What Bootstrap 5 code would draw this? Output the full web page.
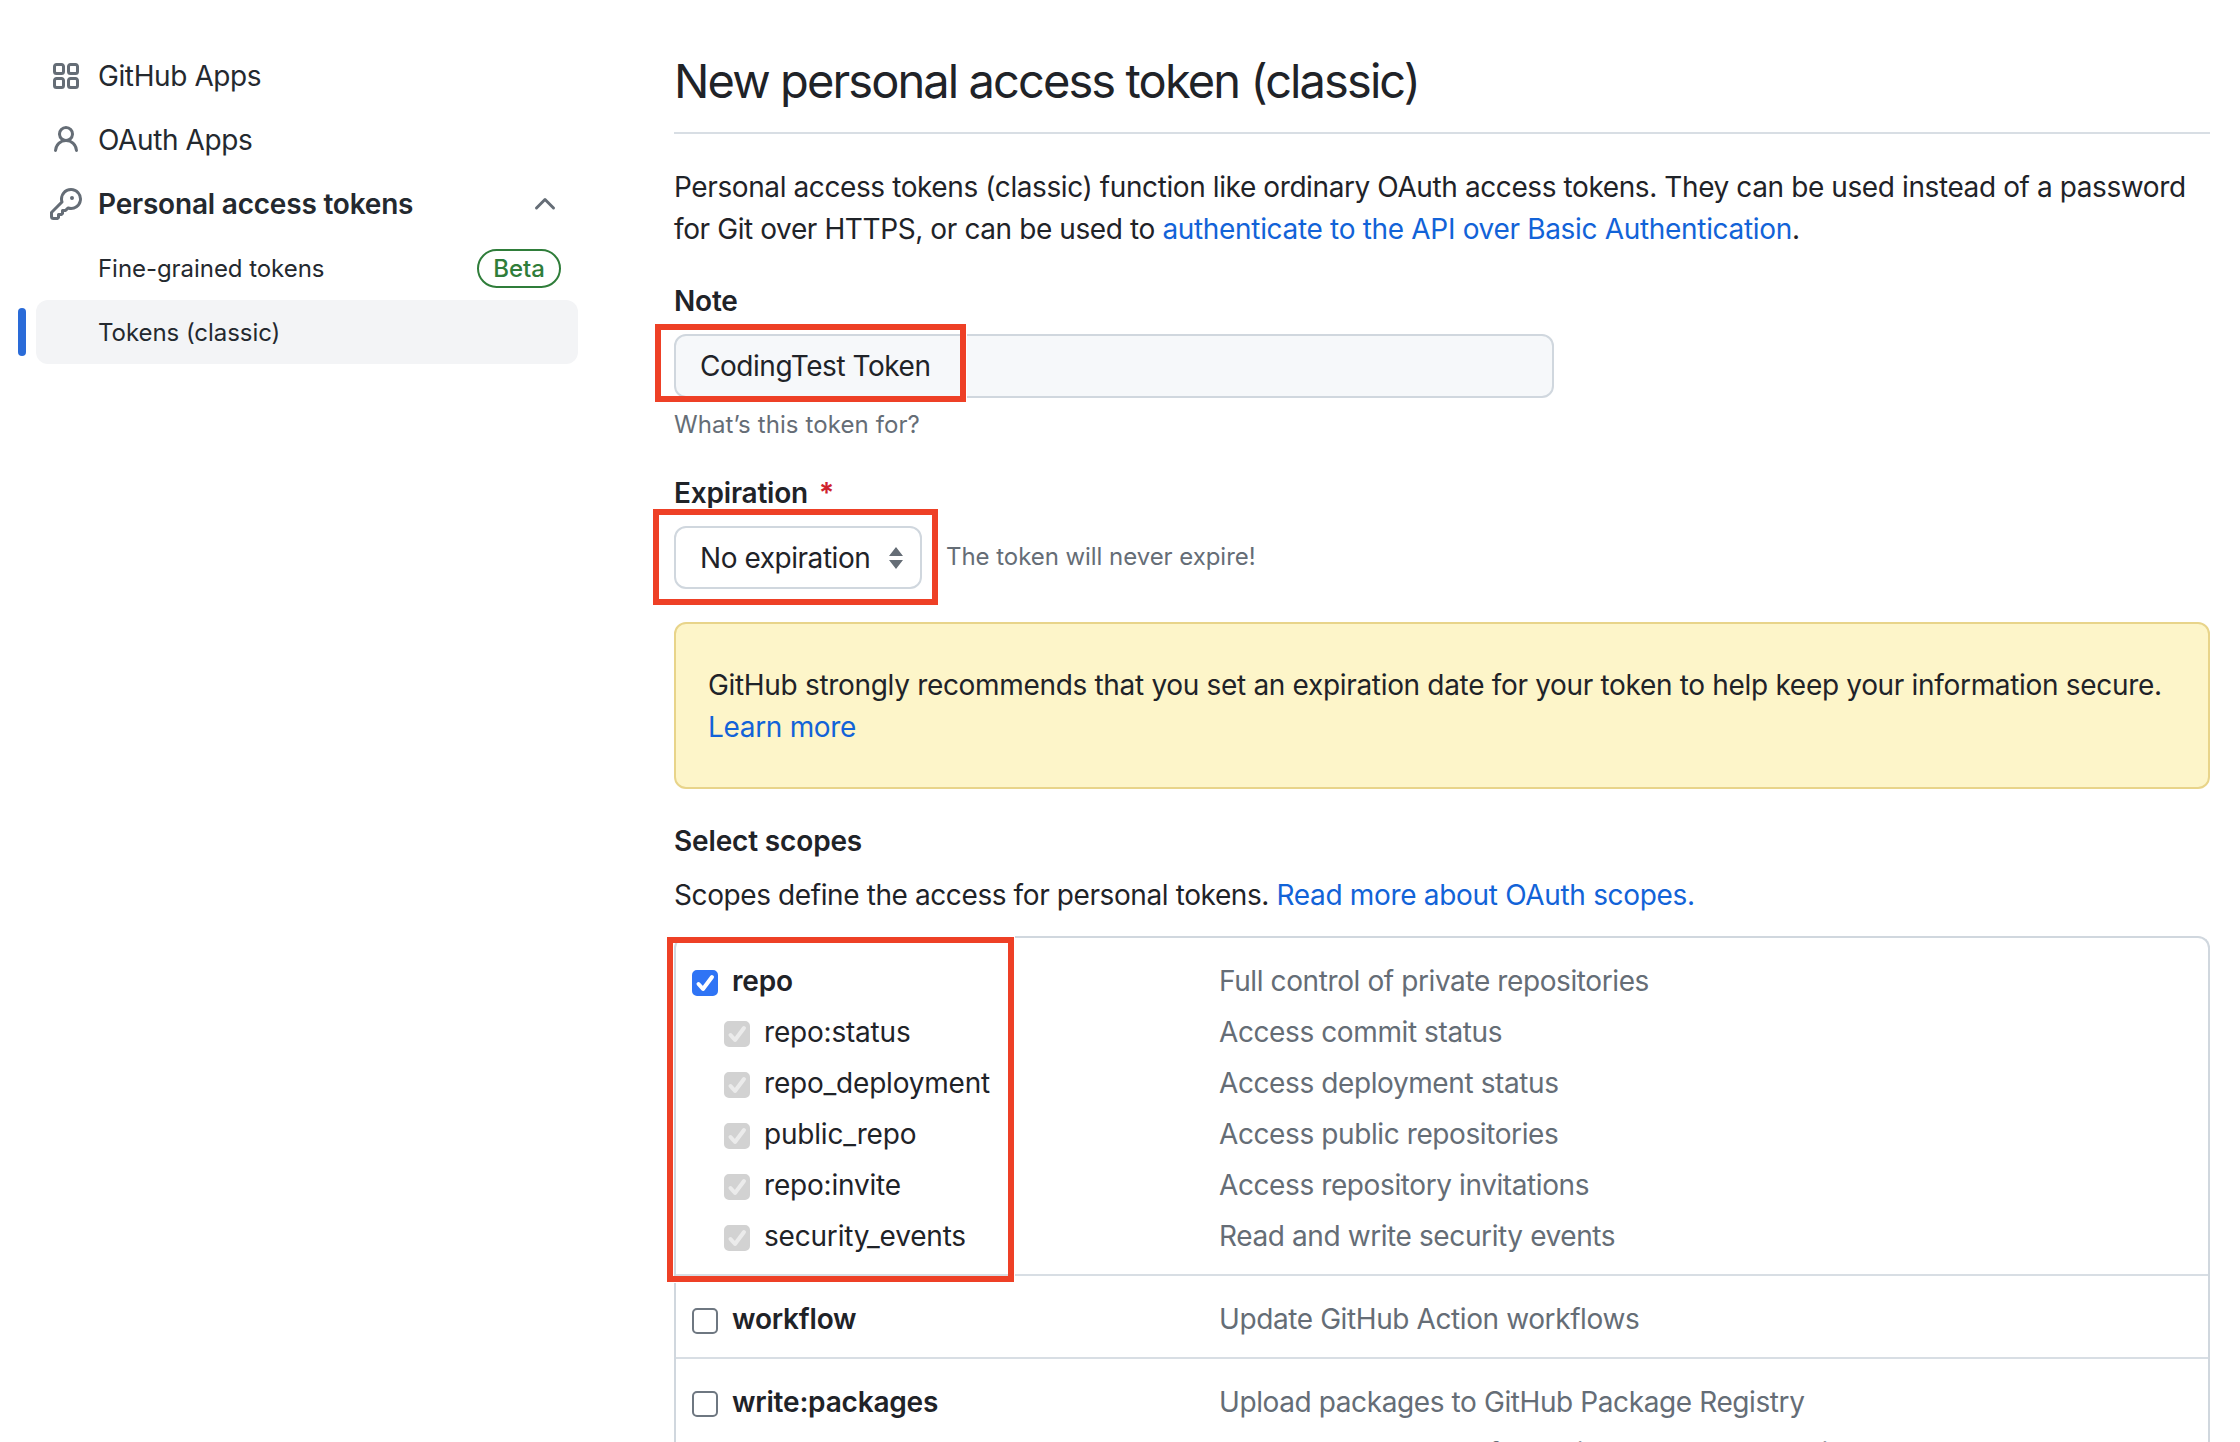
<!DOCTYPE html>
<html lang="en">
<head>
  <meta charset="utf-8">
  <meta name="viewport" content="width=device-width,initial-scale=1">
  <title>New personal access token (classic)</title>
  <link href="https://cdn.jsdelivr.net/npm/bootstrap@5.3.0/dist/css/bootstrap.min.css" rel="stylesheet">
  <style>
    html, body { height: 1442px; overflow: hidden; }
    body { position: relative; font-family: Inter, "Liberation Sans", sans-serif; font-size: 28px; line-height: 42px; color: #1f2328; letter-spacing: -.4px; }
    a { color: #1263d8; text-decoration: none; letter-spacing: -.32px; }

    .side-col { width: 674px; padding: 44px 0 0 36px; flex: none; }
    .side-item { height: 64px; width: 542px; padding-left: 14px; gap: 16px; color: #24292f; position: relative; }
    .side-item svg { width: 32px; height: 32px; fill: #656d76; flex: none; }
    .side-item.strong { font-weight: 600; letter-spacing: -.2px; }
    .side-sub { padding: 2px 0 0 62px; font-size: 24px; letter-spacing: -.05px; }
    .side-on { background: #f3f4f6; border-radius: 12px; }
    .side-on::before { content: ""; position: absolute; left: -18px; top: 8px; bottom: 8px; width: 8px; border-radius: 4px; background: #2a6bd8; }
    .beta-tag { margin: -2px 17px 0 auto; width: 84px; height: 39px; border: 2px solid #2f7d3a; border-radius: 20px; color: #2f7d3a; font-size: 24px; font-weight: 500; line-height: 35px; text-align: center; }
    .chev { margin-left: auto; margin-right: 17px; }

    .main-col { width: 1536px; flex: none; padding-top: 51px; }
    .page-title { font-size: 47px; line-height: 60px; font-weight: 400; margin: 0; padding-bottom: 21px; border-bottom: 2px solid #d8dee4; letter-spacing: -1.9px; }
    .intro { margin: 32px 0 0; }
    .fld-label { font-weight: 600; margin: 30px 0 12px; display: block; letter-spacing: -.2px; }
    .fld-label i { color: #cf222e; font-style: normal; margin-left: 4px; }
    .tok-input.form-control { width: 880px; height: 64px; padding: 0 24px; font-size: 28px; letter-spacing: -.45px; color: #1f2328; background: #f6f8fa; border: 2px solid #d0d7de; border-radius: 12px; }
    .fld-hint { font-size: 24px; line-height: 36px; letter-spacing: .1px; color: #656d76; margin-top: 9px; }
    .fld-hint + .fld-label { margin-top: 29px; }
    .exp-select.form-select { width: 248px; height: 63px; padding: 0 24px; font-size: 28px; letter-spacing: -.45px; color: #1f2328; border: 2px solid #d0d7de; border-radius: 12px; background-size: 16px 24px; background-position: right 16px center; background-image: url("data:image/svg+xml,%3Csvg xmlns='http://www.w3.org/2000/svg' viewBox='0 0 16 24'%3E%3Cpath fill='%23656d76' d='M8 1l7 9H1zM8 23l-7-9h14z'/%3E%3C/svg%3E"); }
    .exp-note { font-size: 24px; letter-spacing: -.05px; color: #656d76; margin: -1px 0 0 24px; }
    .warn-box.alert { margin: 33px 0 0; padding: 40px 32px 39px; background: #fdf5c9; border: 2px solid #e8d48a; border-radius: 12px; color: #1f2328; letter-spacing: -.32px; }
    .sect-title { font-weight: 600; margin: 31px 0 12px; letter-spacing: -.15px; }
    .scope-box { margin-top: 20px; border: 2px solid #d0d7de; border-bottom: 0; border-radius: 12px 12px 0 0; }
    .scope-grp { padding: 17px 16px 13px; border-bottom: 2px solid #d8dee4; }
    .scope-row { height: 51px; }
    .scope-name { width: 527px; flex: none; letter-spacing: -.2px; }
    .scope-name b { font-weight: 600; margin-left: 14px; }
    .scope-name span { margin-left: 14px; }
    .scope-row.nested { padding-left: 32px; }
    .scope-row.nested .scope-name { width: 495px; }
    .scope-desc { color: #656d76; }
    .form-check-input.tick { width: 26px; height: 26px; margin: 4px 0 0; border: 2px solid #6e7781; border-radius: 5px; flex: none; background-size: 26px 26px; background-position: -2px -2px; }
    .form-check-input.tick:checked { background-color: #2f74f5; border-color: #2f74f5; --bs-form-check-bg-image: url("data:image/svg+xml,%3Csvg xmlns='http://www.w3.org/2000/svg' viewBox='0 0 26 26'%3E%3Cpath fill='none' stroke='%23fff' stroke-width='4' stroke-linecap='round' stroke-linejoin='round' d='M6.500 14l4.500 5 9-12'/%3E%3C/svg%3E"); }
    .form-check-input.tick:disabled { background-color: #d2d2d2; border-color: #d2d2d2; opacity: 1; }
    .form-check-input.tick:checked:disabled { --bs-form-check-bg-image: url("data:image/svg+xml,%3Csvg xmlns='http://www.w3.org/2000/svg' viewBox='0 0 26 26'%3E%3Cpath fill='none' stroke='%23ebebeb' stroke-width='4' stroke-linecap='round' stroke-linejoin='round' d='M6.500 14l4.500 5 9-12'/%3E%3C/svg%3E"); }

    .red-mark { position: absolute; border: 6px solid #ee4026; outline: 1px solid #fff; }
    .mark-note { left: 655px; top: 324px; width: 311px; height: 78px; }
    .mark-exp { left: 653px; top: 509px; width: 285px; height: 96px; }
    .mark-repo { left: 667px; top: 937px; width: 347px; height: 345px; }
  </style>
</head>

<body>
  <div class="d-flex">

    <!-- sidebar -->
    <nav class="side-col">
      <div class="side-item d-flex align-items-center">
        <svg viewBox="0 0 16 16"><path d="M1.5 3.25c0-.966.784-1.75 1.75-1.75h2.5c.966 0 1.75.784 1.75 1.75v2.5A1.75 1.75 0 0 1 5.75 7.5h-2.5A1.75 1.75 0 0 1 1.5 5.75Zm7 0c0-.966.784-1.75 1.75-1.75h2.5c.966 0 1.75.784 1.75 1.75v2.5a1.75 1.75 0 0 1-1.75 1.75h-2.5A1.75 1.75 0 0 1 8.5 5.75Zm-7 7c0-.966.784-1.75 1.75-1.75h2.5c.966 0 1.75.784 1.75 1.75v2.5a1.75 1.75 0 0 1-1.75 1.75h-2.5a1.75 1.75 0 0 1-1.75-1.75Zm7 0c0-.966.784-1.75 1.75-1.75h2.5c.966 0 1.75.784 1.75 1.75v2.5a1.75 1.75 0 0 1-1.75 1.75h-2.5a1.75 1.75 0 0 1-1.75-1.75ZM3.25 3a.25.25 0 0 0-.25.25v2.5c0 .138.112.25.25.25h2.5A.25.25 0 0 0 6 5.75v-2.5A.25.25 0 0 0 5.75 3Zm7 0a.25.25 0 0 0-.25.25v2.5c0 .138.112.25.25.25h2.5a.25.25 0 0 0 .25-.25v-2.5a.25.25 0 0 0-.25-.25ZM3 10.25v2.5c0 .138.112.25.25.25h2.5a.25.25 0 0 0 .25-.25v-2.5a.25.25 0 0 0-.25-.25h-2.5a.25.25 0 0 0-.25.25Zm7.25-.25a.25.25 0 0 0-.25.25v2.5c0 .138.112.25.25.25h2.5a.25.25 0 0 0 .25-.25v-2.5a.25.25 0 0 0-.25-.25Z"/></svg>
        GitHub Apps
      </div>
      <div class="side-item d-flex align-items-center">
        <svg viewBox="0 0 16 16"><path d="M10.561 8.073a6.005 6.005 0 0 1 3.432 5.142.75.75 0 1 1-1.498.07 4.5 4.5 0 0 0-8.99 0 .75.75 0 0 1-1.498-.07 6.004 6.004 0 0 1 3.431-5.142 3.999 3.999 0 1 1 5.123 0ZM10.5 5a2.5 2.5 0 1 0-5 0 2.5 2.5 0 0 0 5 0Z"/></svg>
        OAuth Apps
      </div>
      <div class="side-item strong d-flex align-items-center">
        <svg viewBox="0 0 16 16"><path d="M10.5 0a5.499 5.499 0 1 1-1.288 10.848l-.932.932a.749.749 0 0 1-.53.22H7v.75a.749.749 0 0 1-.22.53l-.5.5a.749.749 0 0 1-.53.22H5v.75a.749.749 0 0 1-.22.53l-.5.5a.749.749 0 0 1-.53.22h-2A1.75 1.75 0 0 1 0 14.25v-2c0-.199.079-.389.22-.53l4.932-4.932A5.5 5.5 0 0 1 10.5 0Zm-4 5.5c-.001.431.069.86.205 1.269a.75.75 0 0 1-.181.768L1.5 12.56v1.69c0 .138.112.25.25.25h1.69l.06-.06v-1.19a.75.75 0 0 1 .75-.75h1.19l.06-.06v-1.19a.75.75 0 0 1 .75-.75h1.19l1.023-1.025a.75.75 0 0 1 .768-.18A4 4 0 1 0 6.5 5.5ZM11 6a1 1 0 1 1 0-2 1 1 0 0 1 0 2Z"/></svg>
        Personal access tokens
        <svg class="chev" viewBox="0 0 16 16"><path d="M3.22 10.53a.749.749 0 0 1 0-1.06l4.25-4.25a.749.749 0 0 1 1.06 0l4.25 4.25a.749.749 0 1 1-1.06 1.06L8 6.811 4.28 10.53a.749.749 0 0 1-1.06 0Z"/></svg>
      </div>
      <div class="side-item side-sub d-flex align-items-center">
        Fine-grained tokens
        <span class="beta-tag">Beta</span>
      </div>
      <div class="side-item side-sub side-on d-flex align-items-center">Tokens (classic)</div>
    </nav>

    <!-- form -->
    <main class="main-col">
      <h1 class="page-title">New personal access token (classic)</h1>
      <p class="intro">Personal access tokens (classic) function like ordinary OAuth access tokens. They can be used instead of a password for Git over HTTPS, or can be used to <a href="#">authenticate to the API over Basic Authentication</a>.</p>

      <label class="fld-label">Note</label>
      <input type="text" class="form-control tok-input" value="CodingTest Token">
      <div class="fld-hint">What’s this token for?</div>

      <label class="fld-label">Expiration <i>*</i></label>
      <div class="d-flex align-items-center">
        <select class="form-select exp-select"><option>No expiration</option></select>
        <span class="exp-note">The token will never expire!</span>
      </div>

      <div class="alert warn-box">GitHub strongly recommends that you set an expiration date for your token to help keep your information secure. <a href="#">Learn more</a></div>

      <div class="sect-title">Select scopes</div>
      <div>Scopes define the access for personal tokens. <a href="#">Read more about OAuth scopes.</a></div>

      <div class="scope-box">
        <div class="scope-grp">
          <div class="scope-row d-flex align-items-center">
            <div class="scope-name d-flex align-items-center"><input class="form-check-input tick" type="checkbox" checked><b>repo</b></div>
            <div class="scope-desc">Full control of private repositories</div>
          </div>
          <div class="scope-row nested d-flex align-items-center">
            <div class="scope-name d-flex align-items-center"><input class="form-check-input tick" type="checkbox" checked disabled><span>repo:status</span></div>
            <div class="scope-desc">Access commit status</div>
          </div>
          <div class="scope-row nested d-flex align-items-center">
            <div class="scope-name d-flex align-items-center"><input class="form-check-input tick" type="checkbox" checked disabled><span>repo_deployment</span></div>
            <div class="scope-desc">Access deployment status</div>
          </div>
          <div class="scope-row nested d-flex align-items-center">
            <div class="scope-name d-flex align-items-center"><input class="form-check-input tick" type="checkbox" checked disabled><span>public_repo</span></div>
            <div class="scope-desc">Access public repositories</div>
          </div>
          <div class="scope-row nested d-flex align-items-center">
            <div class="scope-name d-flex align-items-center"><input class="form-check-input tick" type="checkbox" checked disabled><span>repo:invite</span></div>
            <div class="scope-desc">Access repository invitations</div>
          </div>
          <div class="scope-row nested d-flex align-items-center">
            <div class="scope-name d-flex align-items-center"><input class="form-check-input tick" type="checkbox" checked disabled><span>security_events</span></div>
            <div class="scope-desc">Read and write security events</div>
          </div>
        </div>
        <div class="scope-grp">
          <div class="scope-row d-flex align-items-center">
            <div class="scope-name d-flex align-items-center"><input class="form-check-input tick" type="checkbox"><b>workflow</b></div>
            <div class="scope-desc">Update GitHub Action workflows</div>
          </div>
        </div>
        <div class="scope-grp">
          <div class="scope-row d-flex align-items-center">
            <div class="scope-name d-flex align-items-center"><input class="form-check-input tick" type="checkbox"><b>write:packages</b></div>
            <div class="scope-desc">Upload packages to GitHub Package Registry</div>
          </div>
          <div class="scope-row nested d-flex align-items-center">
            <div class="scope-name d-flex align-items-center"><input class="form-check-input tick" type="checkbox"><span>read:packages</span></div>
            <div class="scope-desc">Download packages from GitHub Package Registry</div>
          </div>
        </div>
      </div>
    </main>
  </div>

  <!-- red annotation boxes drawn over the screenshot -->
  <div class="red-mark mark-note"></div>
  <div class="red-mark mark-exp"></div>
  <div class="red-mark mark-repo"></div>

  <script src="https://cdn.jsdelivr.net/npm/bootstrap@5.3.0/dist/js/bootstrap.bundle.min.js"></script>
</body>
</html>
